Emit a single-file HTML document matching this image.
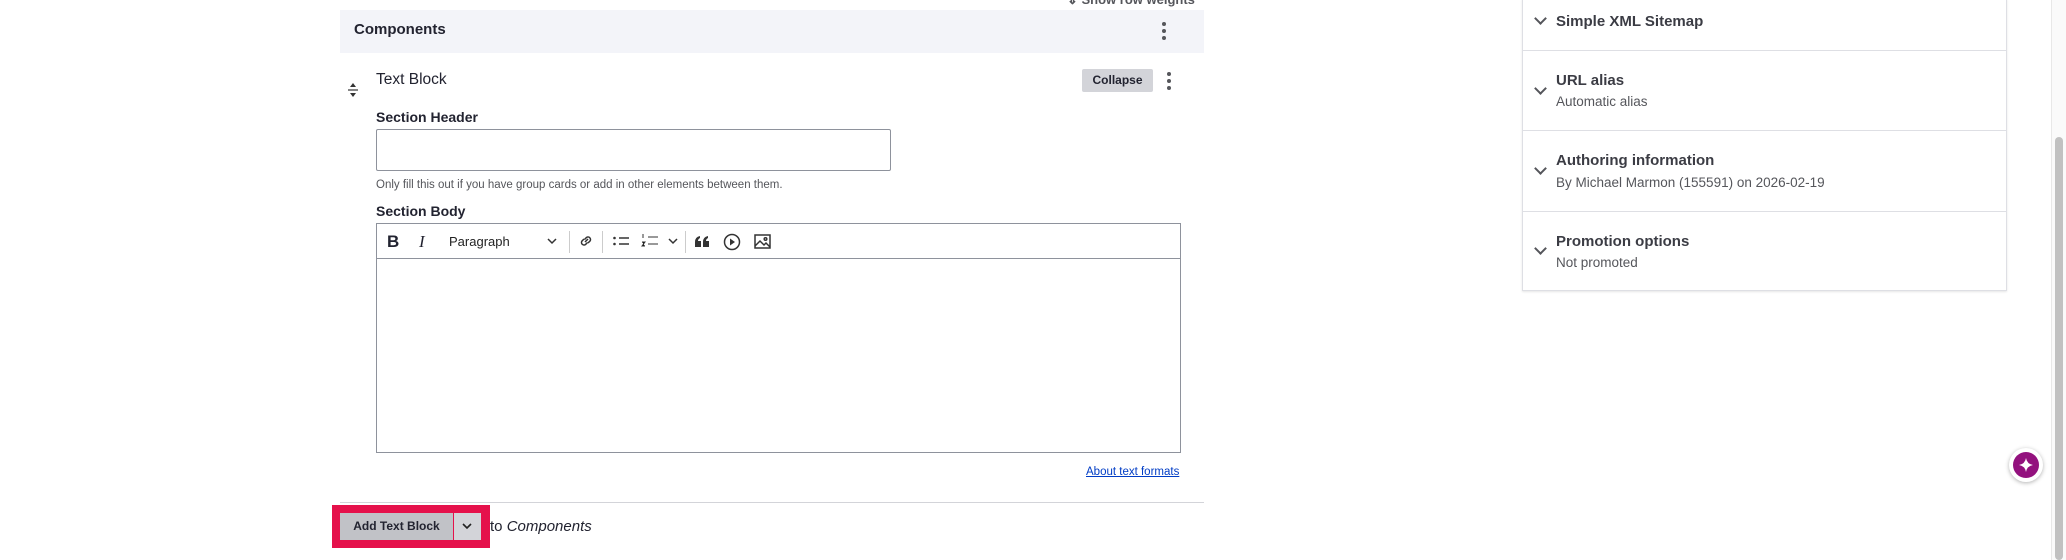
<!DOCTYPE html>
<html><head><meta charset="utf-8"><style>
*{box-sizing:border-box;margin:0;padding:0}
body{width:2066px;height:560px;overflow:hidden;background:#fff;font-family:"Liberation Sans",sans-serif;color:#222330;position:relative}
.a{position:absolute}
.lbl{font-weight:bold;font-size:14px}
.kebab{width:4px}
.kebab i{display:block;width:4px;height:4px;border-radius:50%;background:#55565b;margin-bottom:3px}
.tb{font-size:13px;color:#222}
.row{border-top:1px solid #dedfe4}
.t{font-weight:bold;font-size:15px;color:#3b3c44}
.s{font-size:13.5px;color:#55565b}
.chev{width:9px;height:9px;border-right:2px solid #55565b;border-bottom:2px solid #55565b;transform:rotate(45deg)}
</style></head><body>
<div class="a" style="left:1067px;top:-8px;font-size:13px;font-weight:bold;color:#55565b">⇕ Show row weights</div>
<div class="a" style="left:340px;top:10px;width:864px;height:43px;background:#f3f4f9"></div>
<div class="a" style="left:354px;top:21px;font-size:15px;font-weight:bold">Components</div>
<div class="a kebab" style="left:1162px;top:22px"><i></i><i></i><i></i></div>
<svg class="a" style="left:347px;top:82px" width="12" height="16"><path d="M6 1l3 4H3z M6 15l3-4H3z" fill="#333"/><path d="M1 8h10" stroke="#333" stroke-width="1.2"/></svg>
<div class="a" style="left:376px;top:71px;font-size:15.5px">Text Block</div>
<div class="a" style="left:1082px;top:69px;width:71px;height:23px;background:#d3d4d9;border-radius:2px;font-size:12px;font-weight:bold;text-align:center;line-height:23px">Collapse</div>
<div class="a kebab" style="left:1167px;top:72px"><i></i><i></i><i></i></div>
<div class="a lbl" style="left:376px;top:109px">Section Header</div>
<div class="a" style="left:376px;top:129px;width:515px;height:42px;border:1px solid #8e929c;border-radius:2px"></div>
<div class="a" style="left:376px;top:179px;font-size:11.5px;color:#55565b">Only fill this out if you have group cards or add in other elements between them.</div>
<div class="a lbl" style="left:376px;top:203px">Section Body</div>
<div class="a" style="left:376px;top:223px;width:805px;height:230px;border:1px solid #8e929c"></div>
<div class="a" style="left:377px;top:258px;width:803px;height:1px;background:#8e929c"></div>
<div class="a" style="left:387px;top:232px;font-size:17px;font-weight:bold">B</div>
<div class="a" style="left:419px;top:232px;font-size:17px;font-style:italic;font-family:'Liberation Serif',serif">I</div>
<div class="a tb" style="left:449px;top:234px">Paragraph</div>
<svg class="a" style="left:546px;top:236px" width="12" height="10"><path d="M2 3l4 4 4-4" stroke="#333" stroke-width="1.5" fill="none"/></svg>
<div class="a" style="left:569px;top:231px;width:1px;height:22px;background:#ccc"></div>
<svg class="a" style="left:578px;top:233px" width="16" height="16" fill="none" stroke="#333" stroke-width="1.5"><path d="M7 9l3-3M6 6l-2 2a2.5 2.5 0 003.5 3.5l2-2M10 10l2-2A2.5 2.5 0 008.5 4.5l-2 2"/></svg>
<div class="a" style="left:602px;top:231px;width:1px;height:22px;background:#ccc"></div>
<svg class="a" style="left:612px;top:234px" width="18" height="14" stroke="#333" stroke-width="1.6"><path d="M7 4h10M7 10h10"/><circle cx="2.5" cy="4" r="1.3" fill="#333" stroke="none"/><circle cx="2.5" cy="10" r="1.3" fill="#333" stroke="none"/></svg>
<svg class="a" style="left:641px;top:233px" width="18" height="16" stroke="#333" stroke-width="1.6"><path d="M7 4h10M7 11h10M2 1v4M1 9h3l-3 4h3" stroke-width="1"/></svg>
<svg class="a" style="left:667px;top:236px" width="12" height="10"><path d="M2 3l4 4 4-4" stroke="#333" stroke-width="1.5" fill="none"/></svg>
<div class="a" style="left:685px;top:231px;width:1px;height:22px;background:#ccc"></div>
<svg class="a" style="left:695px;top:236px" width="15" height="11" fill="#333"><path d="M0 11V6Q0 1 5 0v2Q3 3 3 5h3v6zM8 11V6Q8 1 13 0v2Q11 3 11 5h3v6z"/></svg>
<svg class="a" style="left:723px;top:233px" width="18" height="18"><circle cx="9" cy="9" r="7.5" stroke="#333" stroke-width="1.5" fill="none"/><path d="M7 5.5l5 3.5-5 3.5z" fill="#333"/></svg>
<svg class="a" style="left:754px;top:234px" width="17" height="15" fill="none" stroke="#333" stroke-width="1.5"><rect x="1" y="1" width="15" height="13"/><path d="M1 12l5-5 4 4 2-2 4 4"/><circle cx="11.5" cy="5" r="1.3"/></svg>
<div class="a" style="left:1086px;top:466px;font-size:11.5px;color:#003cc5;text-decoration:underline">About text formats</div>
<div class="a" style="left:340px;top:502px;width:864px;height:1px;background:#d3d4d9"></div>
<div class="a" style="left:332px;top:505px;width:158px;height:43px;background:#e5114b"></div>
<div class="a" style="left:340px;top:513px;width:113px;height:27px;background:#c1c2c7;font-size:12px;font-weight:bold;text-align:center;line-height:27px">Add Text Block</div>
<div class="a" style="left:454px;top:513px;width:27px;height:27px;background:#d3d4d9"></div>
<svg class="a" style="left:461px;top:521px" width="12" height="10"><path d="M2 3l4 4 4-4" stroke="#222" stroke-width="1.6" fill="none"/></svg>
<div class="a" style="left:490px;top:518px;font-size:15px"><span>to </span><i>Components</i></div>

<div class="a" style="left:1522px;top:-2px;width:485px;height:293px;border:1px solid #dedfe4;box-shadow:0 1px 2px rgba(0,0,0,.1)"></div>
<div class="a row" style="left:1523px;top:50px;width:483px"></div>
<div class="a row" style="left:1523px;top:130px;width:483px"></div>
<div class="a row" style="left:1523px;top:211px;width:483px"></div>
<div class="a chev" style="left:1536px;top:14px"></div>
<div class="a t" style="left:1556px;top:13px">Simple XML Sitemap</div>
<div class="a chev" style="left:1536px;top:84px"></div>
<div class="a t" style="left:1556px;top:72px">URL alias</div>
<div class="a s" style="left:1556px;top:94px">Automatic alias</div>
<div class="a chev" style="left:1536px;top:164px"></div>
<div class="a t" style="left:1556px;top:152px">Authoring information</div>
<div class="a s" style="left:1556px;top:175px">By Michael Marmon (155591) on 2026-02-19</div>
<div class="a chev" style="left:1536px;top:244px"></div>
<div class="a t" style="left:1556px;top:233px">Promotion options</div>
<div class="a s" style="left:1556px;top:255px">Not promoted</div>

<div class="a" style="left:2051px;top:0;width:15px;height:560px;background:#fafafa;border-left:1px solid #e8e8e8"></div>
<div class="a" style="left:2055px;top:137px;width:8px;height:423px;background:#c1c1c1;border-radius:4px"></div>
<div class="a" style="left:2009px;top:448px;width:34px;height:34px;border-radius:50%;background:#fff;box-shadow:0 1px 4px rgba(0,0,0,.3)"></div>
<div class="a" style="left:2013px;top:452px;width:26px;height:26px;border-radius:50%;background:#93117e"></div>
<svg class="a" style="left:2017px;top:456px" width="18" height="18"><path d="M9 2Q10 8 16 9Q10 10 9 16Q8 10 2 9Q8 8 9 2z" fill="#fff"/></svg>
</body></html>
